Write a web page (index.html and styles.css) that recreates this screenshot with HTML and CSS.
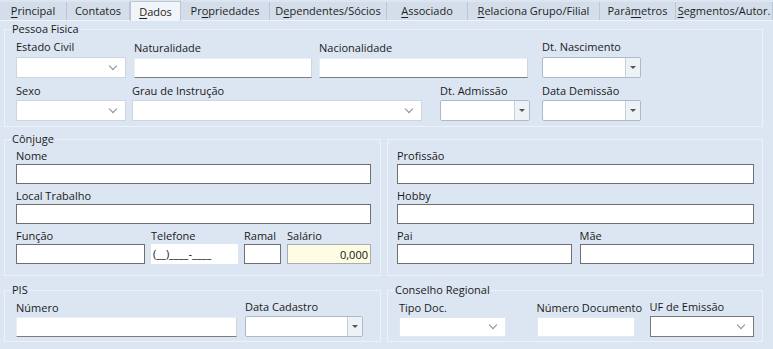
FILE: index.html
```html
<!DOCTYPE html>
<html lang="pt-BR">
<head>
  <meta charset="UTF-8" />
  <title>Cadastro - Dados</title>
  <link rel="stylesheet" href="styles.css">
</head>
<body>

  <!-- Abas -->
  <div class="tabs">
    <div class="tab"><span><u>P</u>rincipal</span></div>
    <div class="tab"><span>Contatos</span></div>
    <div class="tab active"><span><u>D</u>ados</span></div>
    <div class="tab"><span>Pr<u>o</u>priedades</span></div>
    <div class="tab"><span>D<u>e</u>pendentes/Sócios</span></div>
    <div class="tab"><span><u>A</u>ssociado</span></div>
    <div class="tab"><span><u>R</u>elaciona Grupo/Filial</span></div>
    <div class="tab"><span>Parâ<u>m</u>etros</span></div>
    <div class="tab"><span><u>S</u>egmentos/Autor.</span></div>
  </div>

  <div class="page">

    <!-- Pessoa Fisica -->
    <fieldset class="group group-pf">
      <legend>Pessoa Fisica</legend>
      <div class="row">
        <div class="field w-estado">
          <label>Estado Civil</label>
          <div class="combo"></div>
        </div>
        <div class="field w-natural">
          <label>Naturalidade</label>
          <div class="flat"></div>
        </div>
        <div class="field w-nacional">
          <label>Nacionalidade</label>
          <div class="flat"></div>
        </div>
        <div class="field w-nasc">
          <label>Dt. Nascimento</label>
          <div class="date"><span class="date-btn"></span></div>
        </div>
      </div>
      <div class="row">
        <div class="field w-sexo">
          <label>Sexo</label>
          <div class="combo"></div>
        </div>
        <div class="field w-grau">
          <label>Grau de Instrução</label>
          <div class="combo"></div>
        </div>
        <div class="field w-admissao">
          <label>Dt. Admissão</label>
          <div class="date"><span class="date-btn"></span></div>
        </div>
        <div class="field w-demissao">
          <label>Data Demissão</label>
          <div class="date"><span class="date-btn"></span></div>
        </div>
      </div>
    </fieldset>

    <!-- Cônjuge -->
    <div class="pair pair-conjuge">
      <fieldset class="group group-left">
        <legend>Cônjuge</legend>
        <div class="stack">
          <div class="field">
            <label>Nome</label>
            <div class="box"></div>
          </div>
          <div class="field">
            <label>Local Trabalho</label>
            <div class="box"></div>
          </div>
          <div class="cols cols-funcao">
            <div class="field">
              <label>Função</label>
              <div class="box"></div>
            </div>
            <div class="field">
              <label>Telefone</label>
              <div class="mask">(__)____-____</div>
            </div>
            <div class="field">
              <label>Ramal</label>
              <div class="box"></div>
            </div>
            <div class="field">
              <label>Salário</label>
              <div class="money">0,000</div>
            </div>
          </div>
        </div>
      </fieldset>

      <fieldset class="group group-right no-legend">
        <div class="stack">
          <div class="field">
            <label>Profissão</label>
            <div class="box"></div>
          </div>
          <div class="field">
            <label>Hobby</label>
            <div class="box"></div>
          </div>
          <div class="cols cols-pais">
            <div class="field">
              <label>Pai</label>
              <div class="box"></div>
            </div>
            <div class="field">
              <label>Mãe</label>
              <div class="box"></div>
            </div>
          </div>
        </div>
      </fieldset>
    </div>

    <!-- PIS / Conselho Regional -->
    <div class="pair pair-docs">
      <fieldset class="group group-left">
        <legend>PIS</legend>
        <div class="row">
          <div class="field w-pis">
            <label>Número</label>
            <div class="flat"></div>
          </div>
          <div class="field w-cadastro">
            <label>Data Cadastro</label>
            <div class="date"><span class="date-btn"></span></div>
          </div>
        </div>
      </fieldset>

      <fieldset class="group group-right group-conselho">
        <legend>Conselho Regional</legend>
        <div class="row">
          <div class="field w-tipo">
            <label>Tipo Doc.</label>
            <div class="combo light"></div>
          </div>
          <div class="field w-numdoc">
            <label>Número Documento</label>
            <div class="plain"></div>
          </div>
          <div class="field w-uf">
            <label>UF de Emissão</label>
            <div class="combo dark"></div>
          </div>
        </div>
      </fieldset>
    </div>

  </div>

</body>
</html>
```

FILE: styles.css
```css
* {
  margin: 0;
  padding: 0;
  box-sizing: border-box;
}

body {
  font-family: "Open Sans", "Noto Sans", sans-serif;
  font-size: 11px;
  color: #1a1a1a;
  background-color: #dce6f2;
  width: 773px;
  height: 349px;
  overflow: hidden;
}

/* ---------- tabs ---------- */

.tabs {
  display: grid;
  grid-template-columns: 67px 63px 51px 89px 117px 81px 132px 76px 97px;
  height: 21px;
  background-color: #dde6f0;
  border-bottom: 1px solid #eef3f8;
}

.tab {
  display: flex;
  align-items: center;
  justify-content: center;
  margin-top: 2px;
  padding-bottom: 2px;
  background-color: #d3deea;
  border-right: 1px solid #b9c7d6;
  color: #1e1e1e;
  white-space: nowrap;
}

.tab.active {
  margin-top: 1px;
  margin-bottom: -1px;
  background-color: #f1f5f9;
  border: 1px solid #b9c7d6;
  border-bottom: none;
  padding-bottom: 0;
}

.tab u {
  text-underline-offset: 2px;
}

/* ---------- page ---------- */

.page {
  padding: 1px 10px 0 4px;
}

.group {
  border: 1px solid #edf2f8;
  min-width: 0;
}

.group legend {
  margin-left: -5px;
  padding: 0 1px;
  line-height: 14px;
}

.group-pf {
  padding: 3px 9px 5px 11px;
}

.row {
  display: flex;
  align-items: flex-end;
}

.row + .row {
  margin-top: 4px;
}

.field label {
  display: block;
  line-height: 15px;
  margin-bottom: 3px;
  white-space: nowrap;
}

.row + .row .field label {
  margin-top: 1px;
  margin-bottom: 2px;
}

.pair {
  display: grid;
  grid-template-columns: 377px 1fr;
  column-gap: 6px;
}

.pair-conjuge {
  margin-top: 5px;
}

.pair-docs {
  margin-top: 7px;
}

.group-left {
  padding: 3px 9px 11px 11px;
}

.group-right {
  padding: 3px 8px 11px 9px;
}

.no-legend {
  margin-top: 7px;
  padding-top: 9px;
}

.stack {
  display: flex;
  flex-direction: column;
  gap: 5px;
}

.stack .field label {
  line-height: 14px;
  margin-bottom: 1px;
}

.cols {
  display: grid;
}

.cols-funcao {
  grid-template-columns: 129px 87px 37px 84px;
  justify-content: space-between;
}

.cols-pais {
  grid-template-columns: 1fr 1fr;
  column-gap: 8px;
}

.pair-docs .group {
  padding-top: 3px;
  padding-bottom: 4px;
}

.pair-docs .field label {
  line-height: 14px;
  margin-bottom: 2px;
}

.group-conselho {
  padding-left: 11px;
}

/* ---------- field widths ---------- */

.w-estado   { width: 110px; }
.w-natural  { width: 178px; margin-left: 8px; }
.w-nacional { width: 209px; margin-left: 7px; }
.w-nasc     { width: 99px;  margin-left: 14px; }

.w-sexo     { width: 110px; }
.w-grau     { width: 290px; margin-left: 6px; }
.w-admissao { width: 90px;  margin-left: 18px; }
.w-demissao { width: 99px;  margin-left: 12px; }

.w-pis      { width: 221px; }
.w-cadastro { width: 118px; margin-left: 8px; }

.w-tipo     { width: 107px; }
.w-numdoc   { width: 98px;  margin-left: 31px; }
.w-uf       { width: 105px; margin-left: 15px; }

/* ---------- controls ---------- */

.combo {
  height: 21px;
  background: #fff;
  border: 1px solid #cdd6e0;
  display: flex;
  align-items: center;
  justify-content: flex-end;
  padding-right: 9px;
}

.combo::after {
  content: "";
  width: 5px;
  height: 5px;
  margin-top: -4px;
  border-right: 1px solid #8a8a8a;
  border-bottom: 1px solid #8a8a8a;
  transform: rotate(45deg);
}

.combo.light {
  height: 20px;
  border-color: #e2e8ef;
}

.combo.dark {
  border-color: #7a7a7a;
}

.flat {
  height: 20px;
  background: #fff;
  border: 1px solid #e9eef3;
  border-bottom-color: #7d7d7d;
  border-right-color: #cfd5dc;
}

.plain {
  height: 20px;
  background: #fff;
  border: 1px solid #e4e9ef;
}

.box {
  height: 20px;
  background: #fff;
  border: 1px solid #6f6f6f;
}

.date {
  height: 21px;
  background: #fff;
  border: 1px solid #abb9c8;
  border-radius: 2px;
  display: flex;
  justify-content: flex-end;
}

.date-btn {
  width: 15px;
  background: #edf2f7;
  border-left: 1px solid #c5d0dc;
  display: flex;
  align-items: center;
  justify-content: center;
}

.date-btn::after {
  content: "";
  border-left: 3px solid transparent;
  border-right: 3px solid transparent;
  border-top: 3px solid #555;
}

.mask {
  height: 20px;
  background: #fff;
  padding: 3px 0 0 2px;
  line-height: 14px;
  color: #111;
}

.money {
  height: 20px;
  background: #fefde3;
  border: 1px solid #a9adb2;
  text-align: right;
  padding: 2px 2px 0 0;
  line-height: 15px;
  color: #111;
}
```
